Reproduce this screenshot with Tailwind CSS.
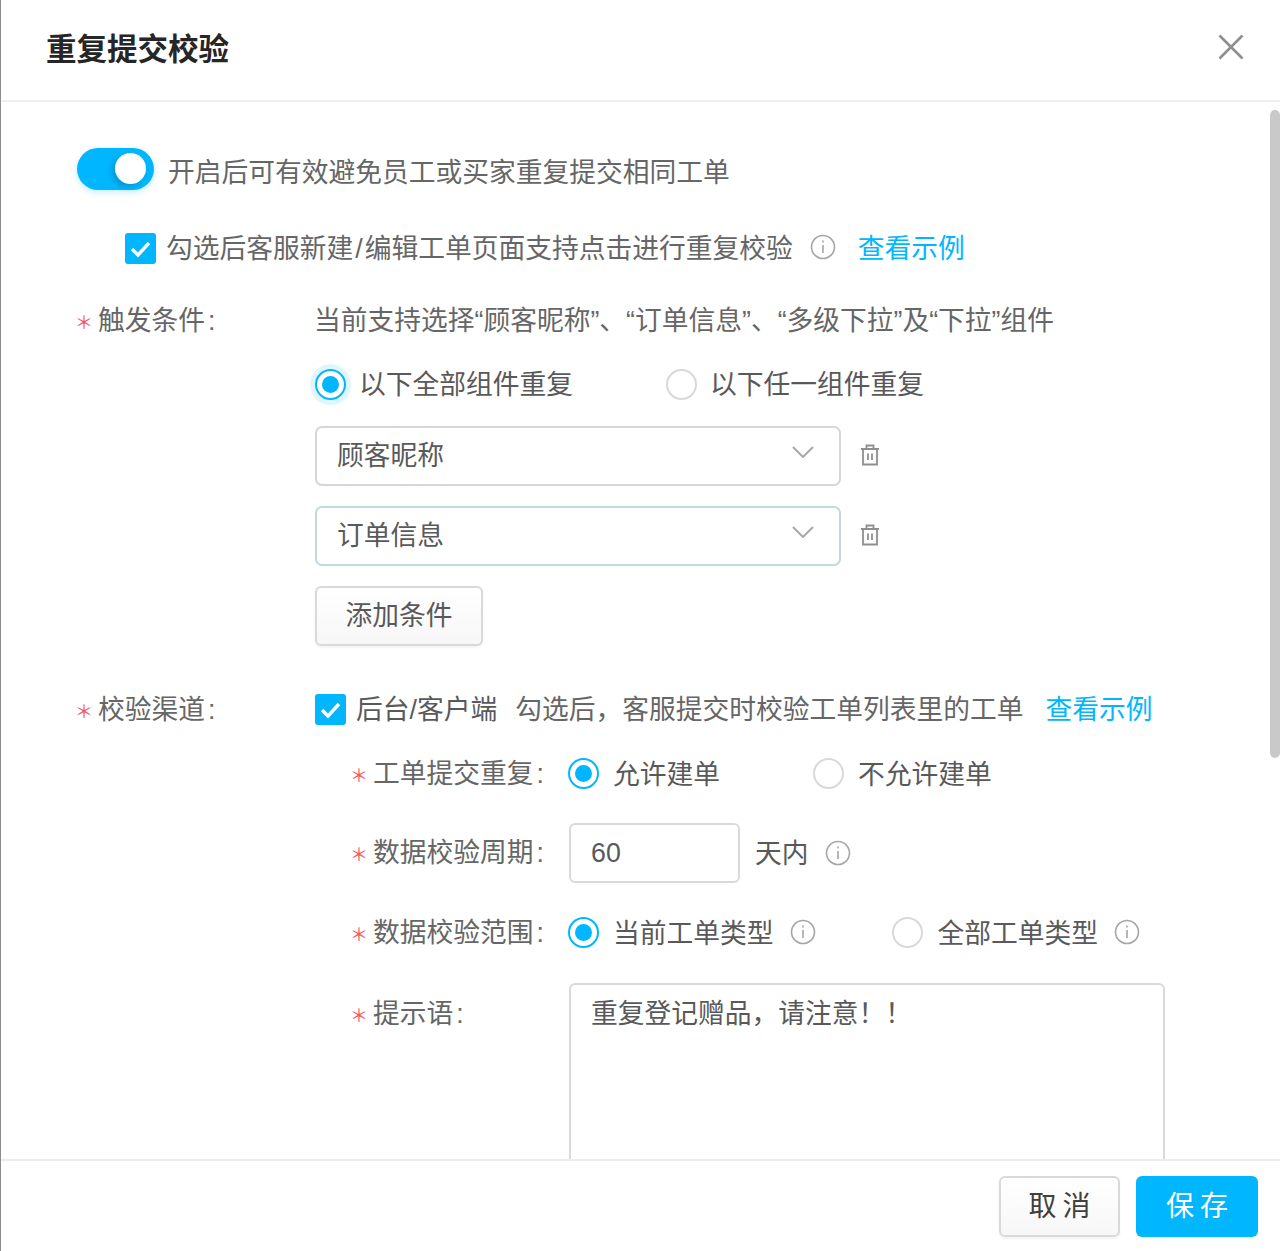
<!DOCTYPE html>
<html lang="zh-CN"><head><meta charset="utf-8"><script src="https://cdn.jsdelivr.net/npm/@tailwindcss/browser@4"></script></head>
<body class="bg-white">
<div class="w-[1280px] h-[1251px] flex flex-col overflow-hidden border-l border-[#8c8c8c] bg-white text-[26.75px] leading-[40px] text-[#666] font-['Liberation_Sans','Noto_Sans_CJK_SC',sans-serif]">
  <header class="h-[102px] shrink-0 flex items-center justify-between pl-[45px] pr-[36px] border-b-2 border-[#efefef] pb-[2px]">
    <h1 class="text-[30.5px] font-bold text-[#262626]">重复提交校验</h1>
    <svg class="w-[26px] h-[26px] -mt-[4px]" viewBox="0 0 26 26" fill="none" stroke="#8f8f8f" stroke-width="2.6"><path d="M1.5 1.5l23 23M24.5 1.5l-23 23"/></svg>
  </header>
  <main class="relative h-[1057px] shrink-0 overflow-hidden pl-[76px]">
    <div class="absolute right-0 top-[8px] w-[10px] h-[648px] rounded-full bg-[#c9c9c9]"></div>
    <div class="flex items-center mt-[46px] h-[42px]">
      <div class="relative w-[77px] h-[42px] rounded-full bg-[#00b7ff] shadow-[0_2px_6px_rgba(0,183,255,0.25)]"><span class="absolute left-[38px] top-[5px] w-[31px] h-[31px] rounded-full bg-white shadow-[-3px_3px_6px_rgba(0,0,0,0.18)]"></span></div>
      <span class="ml-[14px] mt-[7px]">开启后可有效避免员工或买家重复提交相同工单</span>
    </div>
    <div class="flex items-center mt-[38px] ml-[48px] h-[40px]">
      <svg class="w-[31px] h-[31px]" viewBox="0 0 31 31"><rect width="31" height="31" rx="3" fill="#00b7ff"/><path d="M7 16l6 6 11-12" fill="none" stroke="#fff" stroke-width="3.4"/></svg>
      <span class="ml-[10px] mt-[2px]">勾选后客服新建<span class="mx-[2px]">/</span>编辑工单页面支持点击进行重复校验</span>
      <svg class="w-[26px] h-[26px] ml-[17px] -mt-[3px]" viewBox="0 0 26 26" fill="none" stroke="#a6a6a6" stroke-width="1.6"><circle cx="13" cy="13" r="11.5"/><path d="M13 11v8M13 6.500v2"/></svg>
      <a class="ml-[22px] mt-[2px] text-[#00b7ff]">查看示例</a>
    </div>
    <div class="flex mt-[33px]">
      <div class="w-[238px] flex h-[40px]"><span class="w-[23px] -ml-[2px] text-[18px] text-[#f5555f] pt-[2px]">&#xFF0A;</span><span>触发条件<span class="ml-[3px]">:</span></span></div>
      <div class="flex-1">
        <div class="h-[40px] -ml-[1px]">当前支持选择“顾客昵称”、“订单信息”、“多级下拉”及“下拉”组件</div>
        <div class="flex items-center mt-[23px] h-[40px] text-[#595959]">
          <span class="w-[31px] h-[31px] rounded-full border-2 border-[#00b7ff] flex items-center justify-center shadow-[0_0_0_5px_#e0f6ff]"><span class="w-[17px] h-[17px] rounded-full bg-[#00b7ff]"></span></span>
          <span class="ml-[13px] mt-[2px] w-[307px]">以下全部组件重复</span>
          <span class="w-[31px] h-[31px] rounded-full border-2 border-[#d9d9d9]"></span>
          <span class="ml-[13px] mt-[2px]">以下任一组件重复</span>
        </div>
        <div class="flex items-center mt-[22px]">
          <div class="w-[526px] h-[60px] rounded-[7px] border-2 border-[#d6d6d6] flex items-center justify-between pl-[20px] pr-[25px] text-[#595959]"><span>顾客昵称</span><svg class="w-[22px] h-[12px] -mt-[8px]" viewBox="0 0 22 12" fill="none" stroke="#a8a8a8" stroke-width="2"><path d="M1 1l10 10L21 1"/></svg></div>
          <svg class="w-[20px] h-[22px] ml-[19px] -mt-[2px]" viewBox="0 0 20 22" fill="none" stroke="#8f8f8f" stroke-width="1.8"><path d="M1 5h18M6.500 5V1.500h7V5M3 5v15.500h14V5M8 9.500v6.500M12 9.500v6.500"/></svg>
        </div>
        <div class="flex items-center mt-[20px]">
          <div class="w-[526px] h-[60px] rounded-[7px] border-2 border-[#c5d8e0] flex items-center justify-between pl-[20px] pr-[25px] text-[#595959]"><span>订单信息</span><svg class="w-[22px] h-[12px] -mt-[8px]" viewBox="0 0 22 12" fill="none" stroke="#a8a8a8" stroke-width="2"><path d="M1 1l10 10L21 1"/></svg></div>
          <svg class="w-[20px] h-[22px] ml-[19px] -mt-[2px]" viewBox="0 0 20 22" fill="none" stroke="#8f8f8f" stroke-width="1.8"><path d="M1 5h18M6.500 5V1.500h7V5M3 5v15.500h14V5M8 9.500v6.500M12 9.500v6.500"/></svg>
        </div>
        <button class="block mt-[20px] w-[168px] h-[60px] rounded-[6px] border-2 border-[#d9d9d9] bg-gradient-to-b from-white to-[#f7f7f7] text-[#595959] shadow-[0_2px_3px_rgba(0,0,0,0.05)]">添加条件</button>
      </div>
    </div>
    <div class="flex mt-[43px]">
      <div class="w-[238px] flex h-[40px] pt-[1px]"><span class="w-[23px] -ml-[2px] text-[18px] text-[#f5555f] pt-[2px]">&#xFF0A;</span><span>校验渠道<span class="ml-[3px]">:</span></span></div>
      <div class="flex-1">
        <div class="flex items-center h-[40px]">
          <svg class="w-[31px] h-[31px]" viewBox="0 0 31 31"><rect width="31" height="31" rx="3" fill="#00b7ff"/><path d="M7 16l6 6 11-12" fill="none" stroke="#fff" stroke-width="3.4"/></svg>
          <span class="ml-[10px] mt-[2px] text-[#595959]">后台/客户端</span>
          <span class="ml-[18px] mt-[2px]">勾选后&#xFF0C;客服提交时校验工单列表里的工单</span>
          <a class="ml-[22px] mt-[2px] text-[#00b7ff]">查看示例</a>
        </div>
        <div class="flex mt-[24px] h-[40px] items-center">
          <div class="w-[253px] flex pl-[37px] mt-[4px]"><span class="w-[23px] -ml-[2px] text-[18px] text-[#f5555f] pt-[2px]">&#xFF0A;</span><span>工单提交重复<span class="ml-[3px]">:</span></span></div>
          <span class="w-[31px] h-[31px] rounded-full border-2 border-[#00b7ff] flex items-center justify-center"><span class="w-[17px] h-[17px] rounded-full bg-[#00b7ff]"></span></span>
          <span class="ml-[14px] mt-[4px] w-[200px] text-[#595959]">允许建单</span>
          <span class="w-[31px] h-[31px] rounded-full border-2 border-[#d9d9d9]"></span>
          <span class="ml-[14px] mt-[4px] text-[#595959]">不允许建单</span>
        </div>
        <div class="flex mt-[30px] items-center h-[60px]">
          <div class="w-[254px] flex pl-[37px] mt-[2px]"><span class="w-[23px] -ml-[2px] text-[18px] text-[#f5555f] pt-[2px]">&#xFF0A;</span><span>数据校验周期<span class="ml-[3px]">:</span></span></div>
          <div class="w-[171px] h-[60px] rounded-[6px] border-2 border-[#d9d9d9] flex items-center pl-[20px] text-[#595959]">60</div>
          <span class="ml-[15px] mt-[2px] text-[#595959]">天内</span>
          <svg class="w-[26px] h-[26px] ml-[16px]" viewBox="0 0 26 26" fill="none" stroke="#a6a6a6" stroke-width="1.6"><circle cx="13" cy="13" r="11.5"/><path d="M13 11v8M13 6.500v2"/></svg>
        </div>
        <div class="flex mt-[29px] h-[40px] items-center">
          <div class="w-[253px] flex pl-[37px] mt-[4px]"><span class="w-[23px] -ml-[2px] text-[18px] text-[#f5555f] pt-[2px]">&#xFF0A;</span><span>数据校验范围<span class="ml-[3px]">:</span></span></div>
          <span class="w-[31px] h-[31px] rounded-full border-2 border-[#00b7ff] flex items-center justify-center"><span class="w-[17px] h-[17px] rounded-full bg-[#00b7ff]"></span></span>
          <span class="ml-[14px] mt-[4px] text-[#595959]">当前工单类型</span>
          <svg class="w-[26px] h-[26px] ml-[16px]" viewBox="0 0 26 26" fill="none" stroke="#a6a6a6" stroke-width="1.6"><circle cx="13" cy="13" r="11.5"/><path d="M13 11v8M13 6.500v2"/></svg>
          <span class="ml-[76px] w-[31px] h-[31px] rounded-full border-2 border-[#d9d9d9]"></span>
          <span class="ml-[15px] mt-[4px] text-[#595959]">全部工单类型</span>
          <svg class="w-[26px] h-[26px] ml-[16px]" viewBox="0 0 26 26" fill="none" stroke="#a6a6a6" stroke-width="1.6"><circle cx="13" cy="13" r="11.5"/><path d="M13 11v8M13 6.500v2"/></svg>
        </div>
        <div class="flex mt-[31px]">
          <div class="w-[254px] flex pl-[37px] pt-[11px]"><span class="w-[23px] -ml-[2px] text-[18px] text-[#f5555f] pt-[2px]">&#xFF0A;</span><span>提示语<span class="ml-[3px]">:</span></span></div>
          <div class="w-[596px] h-[240px] rounded-[6px] border-2 border-[#d9d9d9] pl-[20px] pt-[9px] text-[#595959]">重复登记赠品&#xFF0C;请注意&#xFF01;&#xFF01;</div>
        </div>
      </div>
    </div>
  </main>
  <footer class="flex-1 border-t-2 border-[#ececec] flex justify-end items-start pt-[15px] pr-[22px] gap-[16px]">
    <button class="w-[121px] h-[61px] pl-[6px] rounded-[6px] border-2 border-[#d9d9d9] bg-gradient-to-b from-white to-[#f7f7f7] text-[#404040] text-[28px] tracking-[6px] shadow-[0_2px_3px_rgba(0,0,0,0.05)]">取消</button>
    <button class="w-[122px] h-[61px] pl-[6px] rounded-[6px] bg-[#00b7ff] text-white text-[28px] tracking-[6px]">保存</button>
  </footer>
</div>
</body></html>
